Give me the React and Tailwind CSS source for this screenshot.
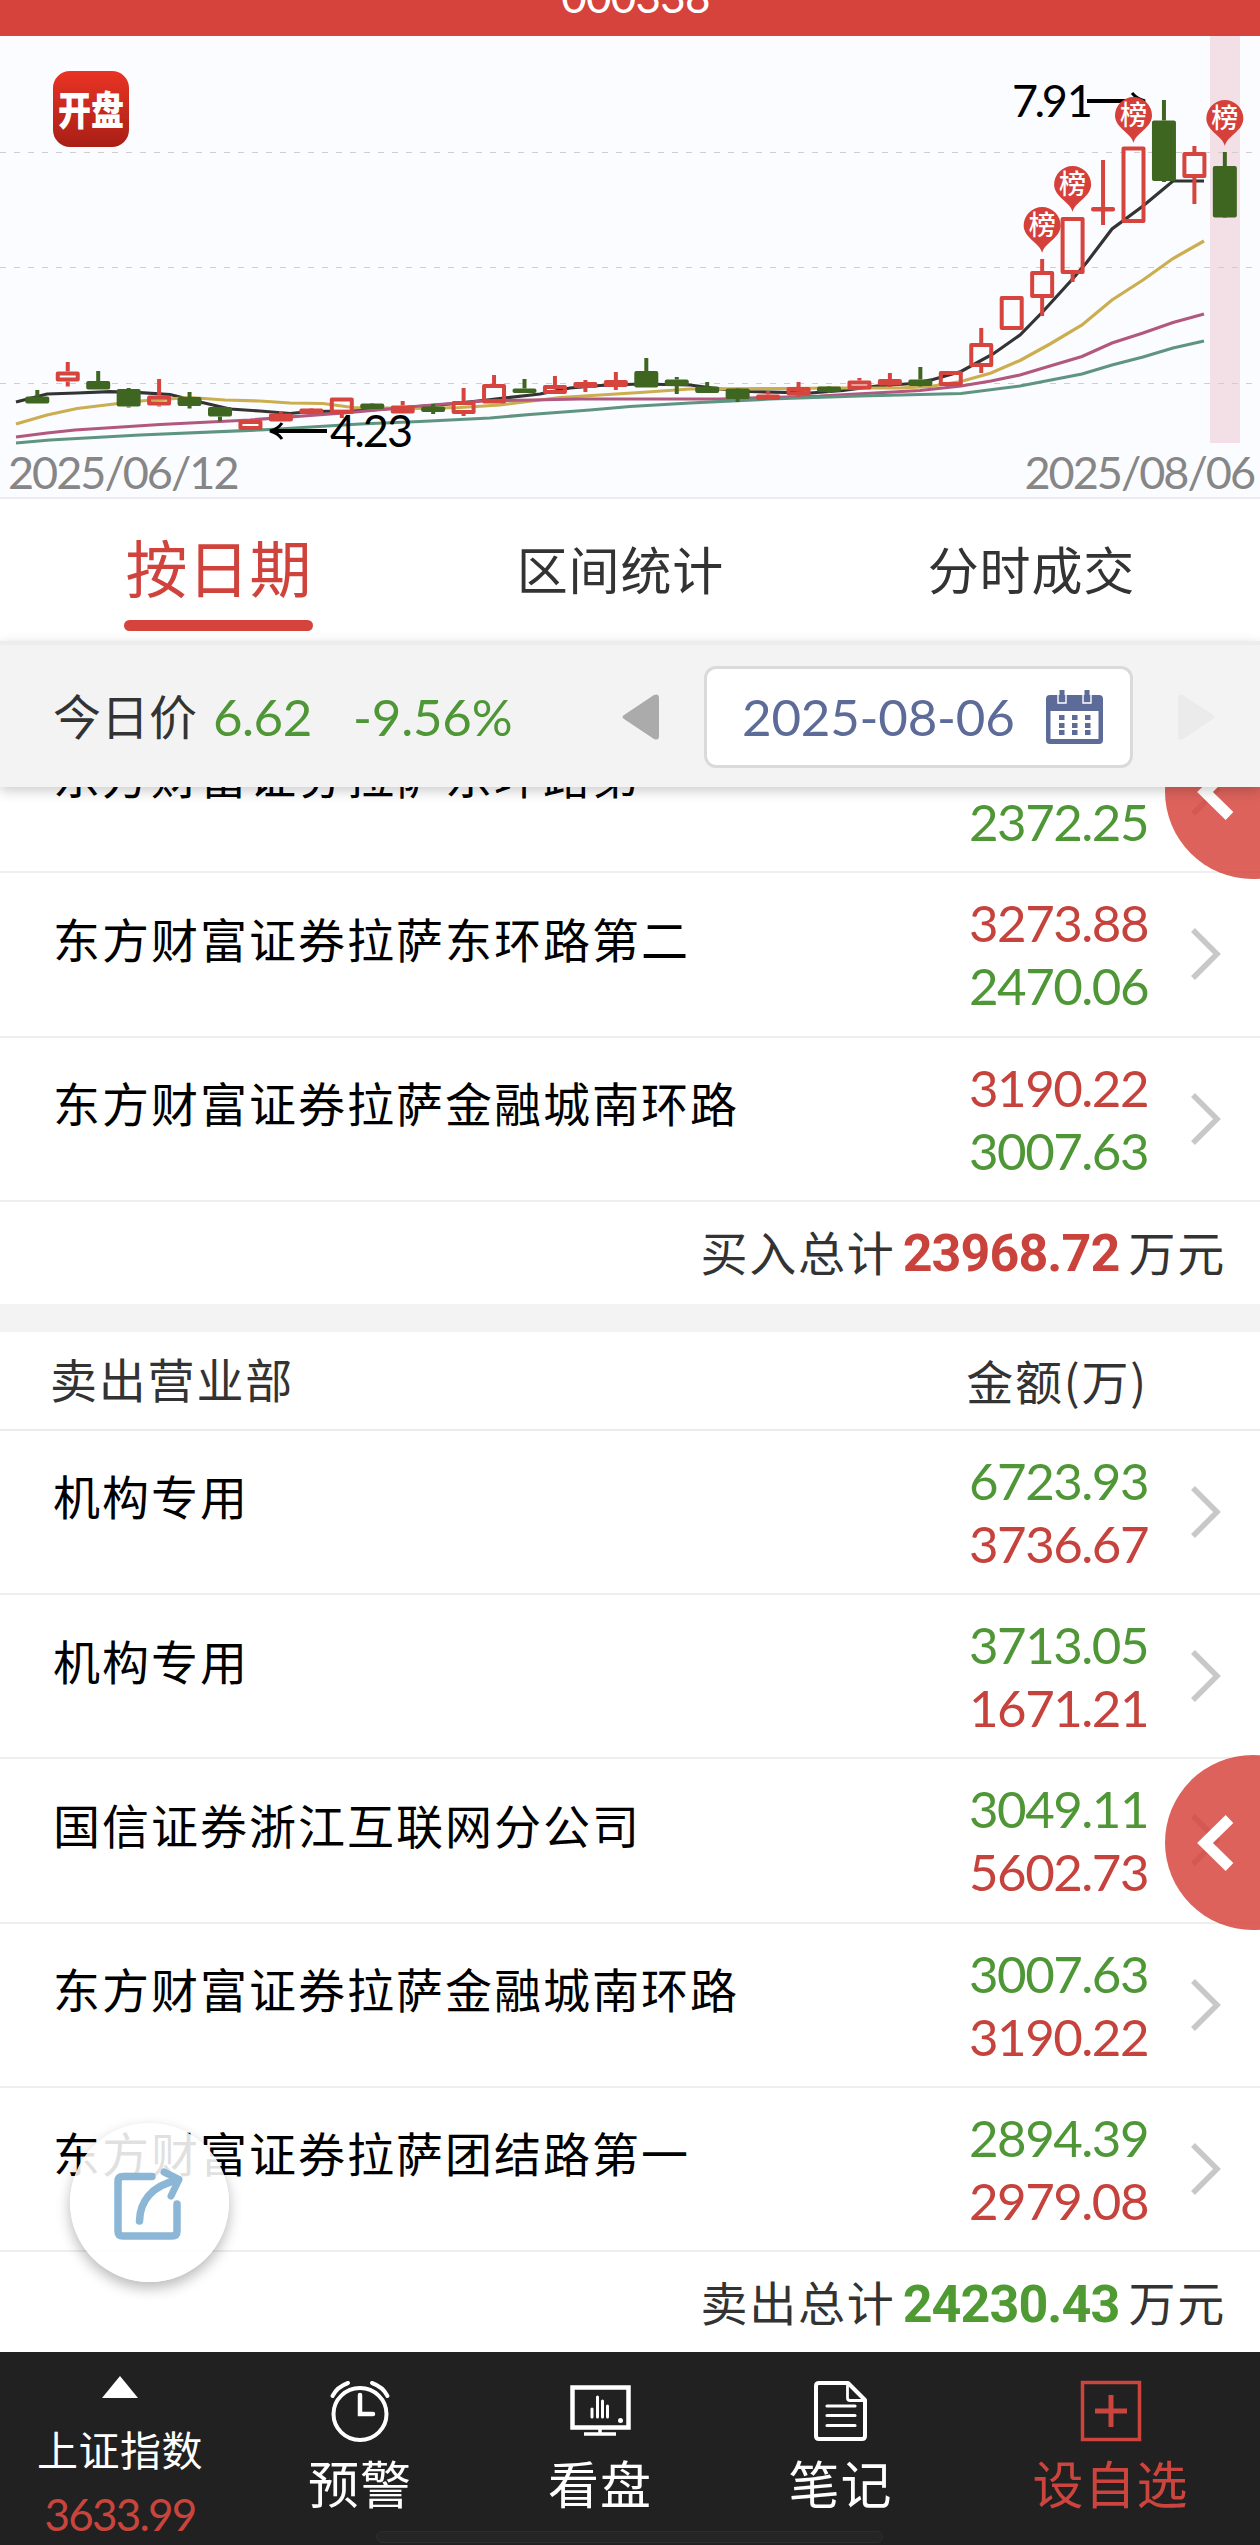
import React from 'react';

const GRID_LINES = [152.5, 267.5, 383.5];

// x step between two candles
const STEP = 30.45;
const FIRST_X = 37.3;

// [up, high, bodyTop, bodyBottom, low]
const candles = [
  [0, 390, 396.5, 403.5, 403.5],
  [1, 362, 371.5, 381.5, 386.5],
  [0, 371, 381, 389.5, 389.5],
  [0, 388, 389, 406.5, 407.5],
  [1, 379, 395.5, 405.5, 406.5],
  [0, 392, 397, 406, 408.5],
  [0, 407, 407, 416.5, 421.5],
  [1, 420, 420, 430, 430],
  [1, 411, 413.5, 421.5, 421.5],
  [1, 408, 408.5, 414, 414],
  [1, 397.5, 397.5, 414, 418],
  [0, 403, 403.5, 409, 409],
  [1, 401, 405.5, 413.5, 413.5],
  [0, 404, 406.5, 412, 414],
  [1, 388, 401, 414, 416],
  [1, 375, 384, 403.5, 403.5],
  [0, 379, 388.5, 392.5, 392.5],
  [1, 376, 385, 394, 394],
  [1, 380, 382, 388, 392],
  [1, 372, 380, 387, 390],
  [0, 358, 371, 387.5, 387.5],
  [0, 377, 379.5, 386, 394],
  [0, 382, 386.5, 393, 393],
  [0, 388, 388.5, 399, 402],
  [1, 391, 394.5, 400, 400],
  [1, 382, 387, 395.5, 397],
  [0, 386, 386.5, 392, 393],
  [1, 378, 380.5, 389.5, 389.5],
  [1, 373, 379, 385.5, 387],
  [0, 367, 379.5, 386, 386.5],
  [1, 371, 371, 386, 386],
  [1, 328, 343, 367, 373],
  [1, 296, 296, 330, 330],
  [1, 259, 271, 298, 316],
  [1, 217, 217, 274, 282],
  [1, 160, 207, 210, 225],
  [1, 146.5, 146.5, 223, 223],
  [0, 100, 120.5, 181, 182],
  [1, 146, 152, 178, 204],
  [0, 152, 166, 217.5, 218],
];

const averages = [
  {
    color: '#333333',
    points: '16,402 47,394 77,393 110,391.7 140,392.7 170,394.5 200,402 230,409 260,411 290,413.5 310,411.5 353,411 400,408 450,404 487,400 540,394 570,388 600,385.5 640,384 690,385 720,389 750,391.5 810,393 843,390.5 877,386 913,383.5 933,379.5 961,371.5 993,354 1020,335 1043,311.5 1073,278.5 1087,262 1112,229 1143,206 1173,181 1204,181',
  },
  {
    color: '#cbae4f',
    points: '16,424 47,415 77,408.5 110,404.5 140,401 190,397.5 225,400 260,401 290,403 323,403.5 353,407.5 420,408.5 460,407.5 500,405 560,397.5 640,392.5 690,389 780,388.5 840,388 900,388 930,386.5 961,381.5 991,373 1020,360.5 1050,344 1082,325 1112,300 1143,280 1173,258.5 1204,241',
  },
  {
    color: '#b2587f',
    points: '16,437 47,433 75,430 160,424.5 250,420 350,412.5 420,406 483,401 580,399 720,399 820,396 920,390.5 961,386 991,381 1020,375 1050,366 1082,356.5 1112,343 1143,333 1173,322.5 1204,314',
  },
  {
    color: '#5f9580',
    points: '16,443 50,440 140,435 270,429.5 360,424 420,421.5 490,418 530,414.5 590,410 630,406.5 690,403 770,399 860,396 961,393.5 1020,386 1082,374 1112,365 1143,357 1173,348 1204,341',
  },
];

// candle index and top of the pin
const pins = [
  { index: 33, top: 207 },
  { index: 34, top: 166 },
  { index: 36, top: 97 },
  { index: 39, top: 100 },
];

const buyRows = [
  { name: '东方财富证券拉萨东环路第一', first: '', second: '2372.25' },
  { name: '东方财富证券拉萨东环路第二', first: '3273.88', second: '2470.06' },
  { name: '东方财富证券拉萨金融城南环路', first: '3190.22', second: '3007.63' },
];

const sellRows = [
  { name: '机构专用', first: '6723.93', second: '3736.67' },
  { name: '机构专用', first: '3713.05', second: '1671.21' },
  { name: '国信证券浙江互联网分公司', first: '3049.11', second: '5602.73' },
  { name: '东方财富证券拉萨金融城南环路', first: '3007.63', second: '3190.22' },
  { name: '东方财富证券拉萨团结路第一', first: '2894.39', second: '2979.08' },
];

const Candle = ({ index, data }) => {
  const [up, high, top, bottom, low] = data;
  const x = FIRST_X + index * STEP;
  const color = up ? '#d6443e' : '#3f6621';
  return (
    <g stroke={color} strokeWidth="4">
      {high < top && <line x1={x} x2={x} y1={high} y2={top} />}
      {low > bottom && <line x1={x} x2={x} y1={bottom} y2={low} />}
      <rect
        x={x - 10}
        y={top + 2}
        width="20"
        height={Math.max(bottom - top - 4, 0.5)}
        fill={up ? 'none' : color}
        strokeLinejoin="round"
      />
    </g>
  );
};

const Pin = ({ index, top }) => {
  const x = FIRST_X + index * STEP;
  return (
    <g transform={`translate(${x} ${top})`}>
      <path d="M0 46 C-2 36 -18.5 31 -18.5 18.5 A18.5 18.5 0 0 1 18.5 18.5 C18.5 31 2 36 0 46Z" fill="#d6403a" />
      <text x="0" y="28" textAnchor="middle" fontSize="27" fontWeight="500" fill="#fff">榜</text>
    </g>
  );
};

const Chart = () => (
  <div className="relative h-[463px] bg-[#fbfcff] border-b-2 border-[#ececee]">
    <svg className="block" width="1260" height="461" viewBox="0 36 1260 461">
      <rect x="1210" y="36" width="30" height="407" fill="#f2e0e6" />
      {GRID_LINES.map((y) => (
        <line key={y} x1="0" x2="1254" y1={y} y2={y} stroke="#cfcfd3" strokeWidth="1.2" strokeDasharray="6 8" />
      ))}
      {averages.map((line) => (
        <polyline key={line.color} points={line.points} fill="none" stroke={line.color} strokeWidth="3.2" />
      ))}
      {candles.map((data, i) => (
        <Candle key={i} index={i} data={data} />
      ))}

      {/* Highest and lowest price marks */}
      <g fill="none" stroke="#000" strokeWidth="4">
        <path d="M1087 101H1144" />
        <path d="M1132 93Q1137 99 1145 101Q1137 103 1132 109" strokeWidth="3" />
        <path d="M327 431H272" />
        <path d="M282 423Q278 429 270 431Q278 433 282 439" strokeWidth="3" />
      </g>
      <text x="1012" y="117" fontSize="45" letterSpacing="-3.5" style={{ fontKerning: 'none' }}>
        7.<tspan letterSpacing="-1">91</tspan>
      </text>
      <text x="330" y="447" fontSize="45" textLength="83">4.23</text>

      {pins.map((pin) => (
        <Pin key={pin.index} {...pin} />
      ))}
    </svg>

    <div className="absolute left-[53px] top-[35px] w-[76px] h-[76px] rounded-[17px] bg-gradient-to-b from-[#e93424] to-[#a81f16] flex items-center justify-center">
      <span className="text-white font-black text-[33px] leading-none scale-y-[1.22]">开盘</span>
    </div>

    <div className="absolute left-2 right-1.5 bottom-0 flex justify-between text-[45px] leading-[50px] tracking-[-2px] text-[#868686]">
      <span>2025/06/12</span>
      <span>2025/08/06</span>
    </div>
  </div>
);

const Tabs = () => (
  <div className="h-[142px] pl-[124px] pr-[125px] flex justify-between bg-white text-[51px] text-[#333]">
    <div className="w-[189px] flex flex-col items-center text-[#cf433c]">
      <span className="h-[121px] pt-px text-[62px] leading-[138px] whitespace-nowrap">按日期</span>
      <span className="w-full h-[11px] rounded-full bg-[#d6433c]"></span>
    </div>
    <span className="leading-[144px] tracking-[0.8px]">区间统计</span>
    <span className="leading-[144px] tracking-[0.8px]">分时成交</span>
  </div>
);

const DateBar = () => (
  <div className="relative z-10 h-[146px] flex items-center bg-[#f3f3f3] border-t-[4px] border-[#ededed] pt-0.5 pl-[53px] shadow-[0_4px_12px_rgba(0,0,0,0.2)]">
    <span className="w-[160px] text-[48px] text-[#333]">今日价</span>
    <span className="w-[140px] text-[51px] tracking-[-0.5px] text-[#4f9636]">6.62</span>
    <span className="w-[269px] text-[51px] tracking-[-0.2px] text-[#4f9636]">-9.56%</span>
    <svg width="37" height="46" viewBox="0 0 37 46">
      <path d="M2 21 32 1Q37-1 37 4V42Q37 47 32 45L2 25Q-1 23 2 21Z" fill="#ababab" />
    </svg>
    <div className="ml-[45px] w-[429px] h-[102px] rounded-[12px] border-[3px] border-[#dadada] bg-white flex items-center pl-[35px]">
      <span className="w-[304px] text-[51px] tracking-[-0.2px] text-[#5d6b99]">2025-08-06</span>
      <CalendarIcon />
    </div>
    <svg className="ml-[45px]" width="37" height="46" viewBox="0 0 37 46">
      <path d="M35 21 5 1Q0-1 0 4V42Q0 47 5 45L35 25Q38 23 35 21Z" fill="#ebebeb" />
    </svg>
  </div>
);

const CalendarIcon = () => (
  <svg width="57" height="54" viewBox="0 0 57 54">
    <rect x="0" y="5" width="57" height="49" rx="4" fill="#5d6b99" />
    <rect x="4.5" y="21" width="48" height="28" fill="#fff" />
    <path d="M12 5V13H20V5M37 5V13H45V5" fill="#5d6b99" stroke="#fff" strokeWidth="1.4" />
    <path d="M13.500 0H18.500V12H13.500ZM38.500 0H43.500V12H38.500Z" fill="#5d6b99" />
    {[13, 26, 39].map((x) =>
      [25, 33, 40].map((y) => <rect key={`${x}-${y}`} x={x} y={y} width="5.5" height="5" fill="#5d6b99" />)
    )}
  </svg>
);

const Row = ({ name, first, second, firstColor, secondColor }) => (
  <div className="h-[164.250px] border-b-2 border-[#eeeeee] flex items-center pl-[53px] pr-[38px]">
    <span className="flex-1 mb-[29px] text-[47px] leading-[60px] tracking-[2px] text-black">{name}</span>
    <span className="flex flex-col text-right text-[51px] leading-[63px] tracking-[-1.500px] mr-[42px]">
      <span className={`h-[63px] ${firstColor}`}>{first}</span>
      <span className={`h-[63px] ${secondColor}`}>{second}</span>
    </span>
    <svg width="32" height="54" viewBox="0 0 32 54">
      <path d="M3 3 27 27 3 51" fill="none" stroke="#c8c8c8" strokeWidth="5.500" />
    </svg>
  </div>
);

const Total = ({ label, value, color }) => (
  <div className="h-[102px] flex items-center justify-end pr-[34px] text-[47px] tracking-[1.8px] text-[#333]">
    <span>{label}</span>
    <span className={`mt-[3px] ml-[7px] mr-[9px] font-['Roboto'] font-bold text-[52px] tracking-[-0.9px] ${color}`}>{value}</span>
    <span>万元</span>
  </div>
);

const SideHandle = ({ position }) => (
  <div className={`absolute left-[1165px] w-[175px] h-[175px] rounded-full bg-[#d6423b]/83 ${position}`}>
    <svg className="absolute left-[32px] top-[58px]" width="38" height="60" viewBox="0 0 38 60">
      <path d="M32.500 6 8 30 32.500 54" fill="none" stroke="#fff" strokeWidth="11" />
    </svg>
  </div>
);

const ShareButton = () => (
  <div className="absolute left-[70px] top-[1336px] w-[159px] h-[159px] rounded-full bg-white/88 shadow-[0_6px_14px_rgba(0,0,0,0.28)]">
    <svg width="159" height="159" viewBox="0 0 159 159" fill="none" stroke="#8bb6d6" strokeWidth="7.500" strokeLinecap="round" strokeLinejoin="round">
      <path d="M82 53.500H53Q48 53.500 48 58.500V108Q48 113 53 113H102Q107 113 107 108V81" />
      <path d="M69.500 98C70 80 80 63 108 57" />
      <path d="M94 49 109 56.500 101 73" strokeWidth="7" />
    </svg>
  </div>
);

const NavItem = ({ label, children, className }) => (
  <div className={`flex flex-col items-center pt-[27px] ${className}`}>
    <svg width="64" height="64" viewBox="0 0 64 64" fill="none" stroke="currentColor">{children}</svg>
    <span className="mt-[10px] text-[51px] leading-[64px] tracking-[1px]">{label}</span>
  </div>
);

const BottomNav = () => (
  <div className="relative h-[193px] flex bg-[#212121] text-white">
    <div className="w-[240px] flex flex-col items-center">
      <svg className="mt-[24px]" width="36" height="22" viewBox="0 0 36 22">
        <path d="M18 0 36 22H0Z" fill="#fff" />
      </svg>
      <span className="mt-[25px] text-[41px] leading-[56px] tracking-[0.5px]">上证指数</span>
      <span className="mt-[7px] text-[44px] leading-[56px] tracking-[-1.8px] text-[#c8453d]">3633.99</span>
    </div>
    <NavItem label="预警" className="w-[240px]">
      <ellipse cx="32" cy="35" rx="26.500" ry="26" strokeWidth="4" />
      <path d="M32 16V35H45" strokeWidth="4.500" strokeLinecap="round" />
      <path d="M4.500 17Q9 8 20 4M59.500 17Q55 8 44 4" strokeWidth="4" strokeLinecap="round" />
    </NavItem>
    <NavItem label="看盘" className="w-[240px]">
      <rect x="4.500" y="8.500" width="56" height="40" strokeWidth="4.500" />
      <path d="M32 49V55M16 55H48" strokeWidth="3.500" />
      <path d="M24 30V38M29.500 18V38M34.500 22V38M39.500 27V38" strokeWidth="3" strokeLinecap="round" />
      <circle cx="52.500" cy="41.500" r="2.500" fill="currentColor" stroke="none" />
    </NavItem>
    <NavItem label="笔记" className="w-[241px]">
      <path d="M10 4H39L56 21V57Q56 60 53 60H10Q7 60 7 57V7Q7 4 10 4Z" strokeWidth="4" strokeLinejoin="round" />
      <path d="M38.500 5V19Q38.500 21.500 41 21.500H55" strokeWidth="2.800" />
      <path d="M18 27H46M18 36.500H46M18 46.500H46" strokeWidth="3.200" strokeLinecap="round" />
    </NavItem>
    <NavItem label="设自选" className="flex-1 text-[#cb453e]">
      <rect x="3.500" y="3.500" width="57" height="57" strokeWidth="3.500" />
      <path d="M16 32H48M32 16V48" strokeWidth="5" />
    </NavItem>
    <span className="absolute left-[376px] bottom-[2px] w-[507px] h-[12px] rounded-full bg-[#252525] border border-[#2e2e2e]"></span>
  </div>
);

const App = () => {
  return (
    <div className="w-[1260px] h-[2545px] overflow-hidden flex flex-col bg-white font-['Lato','Noto_Sans_CJK_SC',sans-serif]">
      <div className="h-9 shrink-0 bg-[#d6433c] overflow-hidden flex items-end justify-center">
        <span className="mb-[18px] pl-[11px] text-[44px] leading-[44px] tracking-[-0.8px] text-white">000338</span>
      </div>
      <Chart />
      <Tabs />
      <DateBar />

      <div className="relative h-[1565px] shrink-0 overflow-hidden">
        <div className="mt-[-78px]">
          {buyRows.map((row) => (
            <Row key={row.name} {...row} firstColor="text-[#c5433c]" secondColor="text-[#4f9636]" />
          ))}
          <Total label="买入总计" value="23968.72" color="text-[#c9423b]" />
          <div className="h-7 bg-[#f3f3f3]"></div>
          <div className="h-[99px] pl-[50px] pr-[112px] flex items-center justify-between border-b-2 border-[#ebebeb] text-[47px] tracking-[1.8px] text-[#333]">
            <span>卖出营业部</span>
            <span className="font-['Noto_Sans_CJK_SC']">金额(万)</span>
          </div>
          {sellRows.map((row, i) => (
            <Row key={i} {...row} firstColor="text-[#4f9636]" secondColor="text-[#c5433c]" />
          ))}
          <Total label="卖出总计" value="24230.43" color="text-[#4f9a32]" />
        </div>

        <SideHandle position="top-[-83px]" />
        <SideHandle position="top-[968px]" />
        <ShareButton />
      </div>

      <BottomNav />
    </div>
  );
};

export default App;
